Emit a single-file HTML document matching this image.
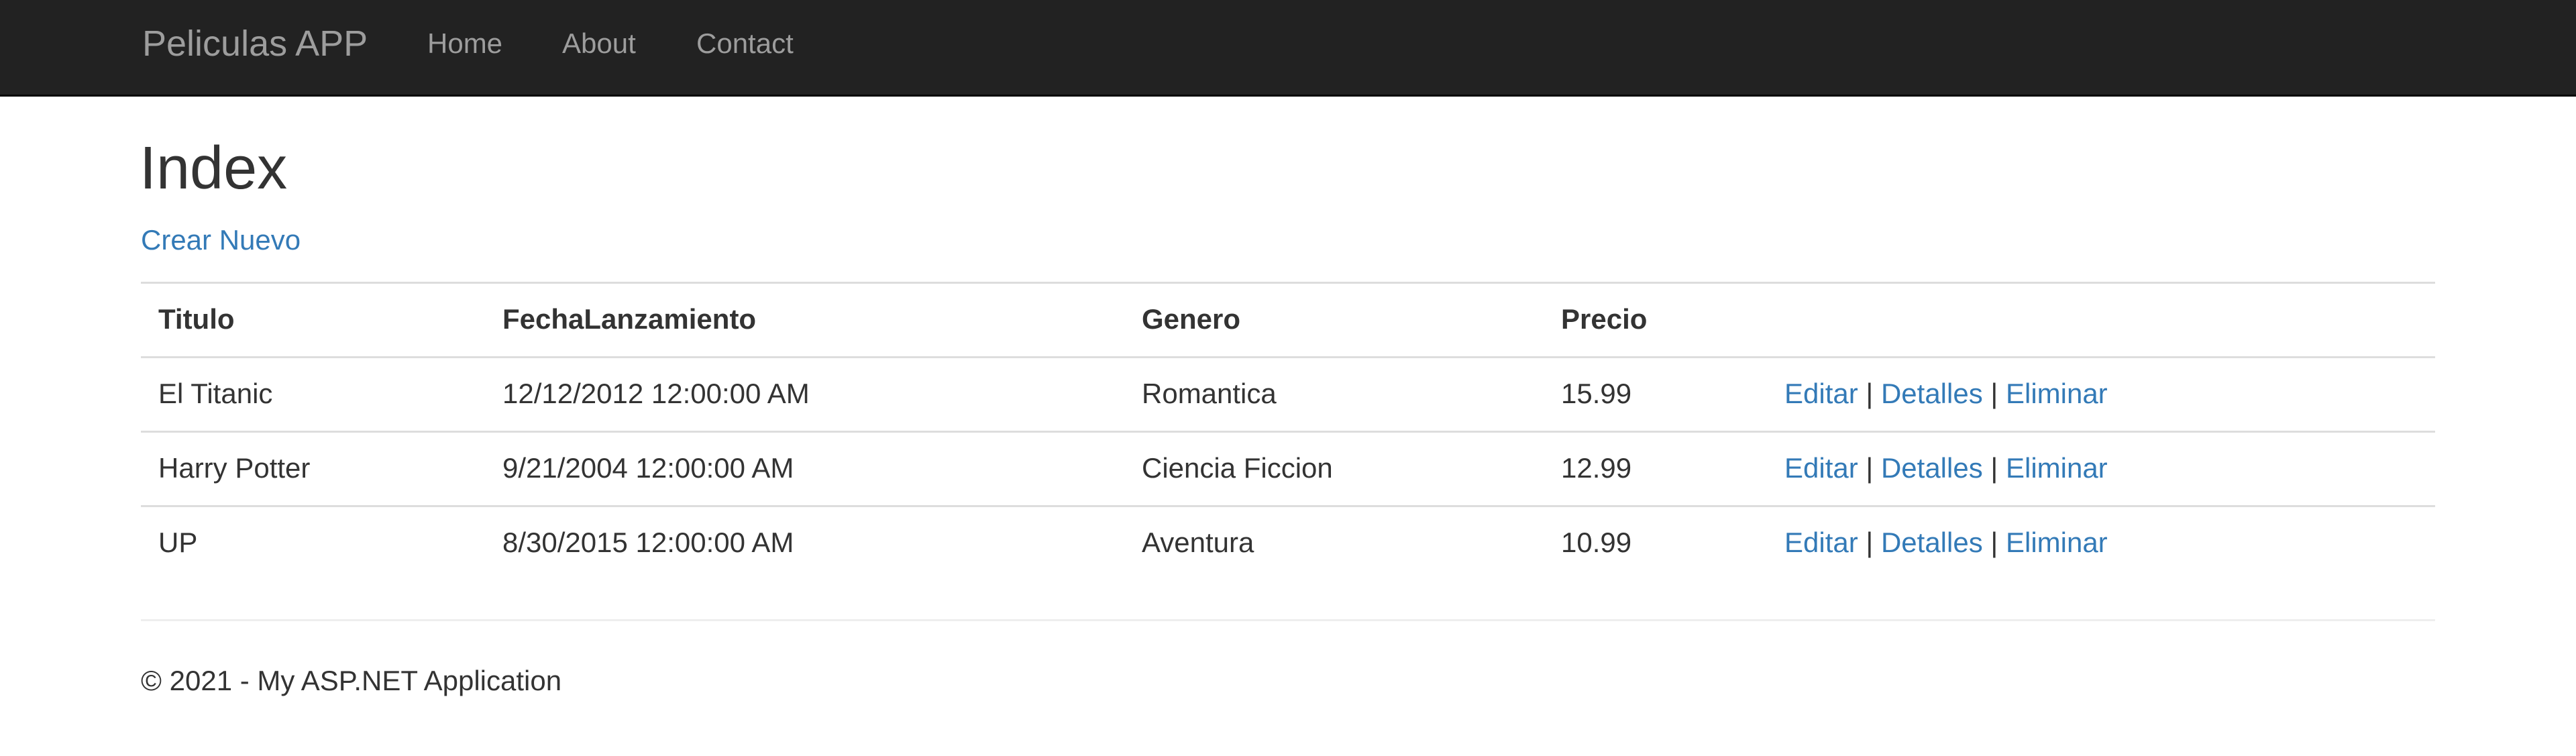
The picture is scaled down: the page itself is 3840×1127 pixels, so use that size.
<!DOCTYPE html>
<html><head><meta charset="utf-8"><style>
*{margin:0;padding:0;box-sizing:border-box}
html,body{width:3840px;height:1127px;background:#fff;overflow:hidden;font-family:"Liberation Sans",Arial,sans-serif;color:#333}
.a{position:absolute;line-height:1;white-space:nowrap}
.nav{position:absolute;left:0;top:0;width:3840px;height:141px;background:#222;border-bottom:3px solid #080808;height:144px}
.n{color:#9d9d9d;font-size:42px}
.line{position:absolute;left:210px;width:3420px;height:3px;background:#ddd}
.t{font-size:42px}
.b{font-weight:bold}
a,.l{color:#337ab7;text-decoration:none}
</style></head><body>
<div class="nav"></div>
<div class="a" style="left:212px;top:38px;font-size:54px;color:#9d9d9d">Peliculas APP</div>
<div class="a n" style="left:637px;top:44px">Home</div>
<div class="a n" style="left:838px;top:44px">About</div>
<div class="a n" style="left:1038px;top:44px">Contact</div>

<div class="a" style="left:208px;top:206px;font-size:90px">Index</div>
<div class="a t l" style="left:210px;top:337px">Crear Nuevo</div>

<div class="line" style="top:420px"></div>
<div class="line" style="top:531px"></div>
<div class="line" style="top:642px"></div>
<div class="line" style="top:753px"></div>

<div class="a t b" style="left:236px;top:455px">Titulo</div>
<div class="a t b" style="left:749px;top:455px">FechaLanzamiento</div>
<div class="a t b" style="left:1702px;top:455px">Genero</div>
<div class="a t b" style="left:2327px;top:455px">Precio</div>

<div class="a t" style="left:236px;top:566px">El Titanic</div>
<div class="a t" style="left:749px;top:566px">12/12/2012 12:00:00 AM</div>
<div class="a t" style="left:1702px;top:566px">Romantica</div>
<div class="a t" style="left:2327px;top:566px">15.99</div>
<div class="a t" style="left:2660px;top:566px"><span class="l">Editar</span> | <span class="l">Detalles</span> | <span class="l">Eliminar</span></div>

<div class="a t" style="left:236px;top:677px">Harry Potter</div>
<div class="a t" style="left:749px;top:677px">9/21/2004 12:00:00 AM</div>
<div class="a t" style="left:1702px;top:677px">Ciencia Ficcion</div>
<div class="a t" style="left:2327px;top:677px">12.99</div>
<div class="a t" style="left:2660px;top:677px"><span class="l">Editar</span> | <span class="l">Detalles</span> | <span class="l">Eliminar</span></div>

<div class="a t" style="left:236px;top:788px">UP</div>
<div class="a t" style="left:749px;top:788px">8/30/2015 12:00:00 AM</div>
<div class="a t" style="left:1702px;top:788px">Aventura</div>
<div class="a t" style="left:2327px;top:788px">10.99</div>
<div class="a t" style="left:2660px;top:788px"><span class="l">Editar</span> | <span class="l">Detalles</span> | <span class="l">Eliminar</span></div>

<div style="position:absolute;left:210px;top:923px;width:3420px;height:3px;background:#eee"></div>
<div class="a t" style="left:210px;top:994px">© 2021 - My ASP.NET Application</div>
</body></html>
